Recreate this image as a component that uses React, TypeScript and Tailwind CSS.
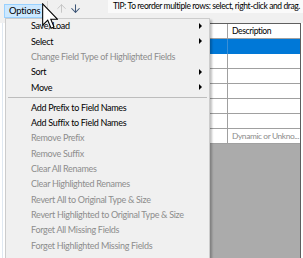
import { ArrowUp, ArrowDown } from 'lucide-react';

type MenuEntry = { label: string; enabled?: boolean; sub?: boolean } | 'sep';

const menuItems: MenuEntry[] = [
  { label: 'Save/Load', enabled: true, sub: true },
  { label: 'Select', enabled: true, sub: true },
  { label: 'Change Field Type of Highlighted Fields' },
  { label: 'Sort', enabled: true, sub: true },
  { label: 'Move', enabled: true, sub: true },
  'sep',
  { label: 'Add Prefix to Field Names', enabled: true },
  { label: 'Add Suffix to Field Names', enabled: true },
  { label: 'Remove Prefix' },
  { label: 'Remove Suffix' },
  { label: 'Clear All Renames' },
  { label: 'Clear Highlighted Renames' },
  { label: 'Revert All to Original Type & Size' },
  { label: 'Revert Highlighted to Original Type & Size' },
  { label: 'Forget All Missing Fields' },
  { label: 'Forget Highlighted Missing Fields' },
];

const gridRows = ['', '', '', '', '', 'Dynamic or Unkno...'];

const Cursor = () => (
  <svg className="absolute left-[42px] top-[3px]" width="16" height="27" viewBox="0 0 12 20">
    <path d="M0.5 0.5 L0.5 16.5 L4.3 12.8 L6.8 18.8 L9 17.9 L6.6 12 L11.5 12 Z" fill="#fff" stroke="#000" strokeWidth="0.8" strokeLinejoin="miter" />
  </svg>
);

export default function App() {
  return (
    <div className="relative w-[303px] h-[258px] overflow-hidden bg-white font-['Lato',sans-serif] text-[9px] tracking-[-0.3px] text-black">
      {/* toolbar */}
      <div className="flex h-[23px] bg-[#f0f0f0]">
        <div className="flex items-start w-[108px] shrink-0">
          <div className="mt-[4px] ml-[4px] flex h-[14px] w-[39px] items-center gap-[3px] border border-[#99d1ff] bg-[#cce8ff] pl-[4px] text-[9.4px] tracking-[-0.2px]">
            <span>Options</span>
            <span className="text-[5px]">▼</span>
          </div>
          <div className="ml-[4px] mt-[1px] h-[20px] w-px bg-[#d4d4d4]" />
          <ArrowUp className="ml-[7px] mt-[2px] text-[#c2c2c2]" size={13} strokeWidth={1.7} />
          <ArrowDown className="ml-[1px] mt-[2px] text-[#3d5677]" size={13} strokeWidth={1.9} />
        </div>
        <div className="flex h-[13px] flex-1 items-center bg-[#fafafa] pl-[5px] whitespace-nowrap text-[8.5px] tracking-[-0.4px]">
          TIP: To reorder multiple rows: select, right-click and drag.
        </div>
      </div>

      {/* body */}
      <div className="flex h-[235px]">
        <div className="w-[7px] shrink-0 bg-white">
          <div className="ml-[2px] h-full w-px bg-[#dfe8f1]" />
        </div>
        <div className="flex flex-1 flex-col border-l border-t border-r border-[#5f5f5f] bg-[#ababab] mr-[2px]">
          <div className="flex h-[15px] bg-white border-b border-[#a0a0a0]">
            <div className="flex-1" />
            <div className="w-[18px] border-r border-[#a0a0a0]" />
            <div className="w-[72px] pl-[4px] pt-[1px] flex items-center text-[8.6px] tracking-[-0.4px]">Description</div>
          </div>
          <div className="flex h-[15px] bg-[#0078d7]">
            <div className="flex-1" />
            <div className="w-[18px] border-r border-[#3b8fd6]" />
            <div className="w-[72px]" />
          </div>
          {gridRows.map((txt, i) => (
            <div key={i} className="flex h-[15px] bg-white border-b border-[#a0a0a0]">
              <div className="flex-1" />
              <div className="w-[18px] border-r border-[#a0a0a0]" />
              <div className="w-[72px] pl-[4px] flex items-center text-[8.4px] tracking-[-0.4px] text-[#8c8c8c] whitespace-nowrap overflow-hidden">{txt}</div>
            </div>
          ))}
        </div>
      </div>

      {/* dropdown menu */}
      <div className="absolute left-[5px] top-[18px] w-[205px] border border-[#cccccc] bg-[#f0f0f0] pb-[5px] shadow-[2px_2px_2px_rgba(0,0,0,0.25)]">
        {menuItems.map((item, i) =>
          item === 'sep' ? (
            <div key={i} className="flex h-[5px] items-center px-[2px]">
              <div className="h-px w-full bg-[#bdbdbd]" />
            </div>
          ) : (
            <div
              key={i}
              className={`flex h-[15.3px] items-center pl-[25px] pr-[7px] pb-[1px] whitespace-nowrap ${item.enabled ? 'text-black' : 'text-[#8d8d8d]'}`}
            >
              <span className="flex-1">{item.label}</span>
              {item.sub && (
                <svg width="3" height="6" viewBox="0 0 3 6">
                  <path d="M0 0 L3 3 L0 6 Z" fill="#000" />
                </svg>
              )}
            </div>
          ),
        )}
      </div>

      <Cursor />
    </div>
  );
}
